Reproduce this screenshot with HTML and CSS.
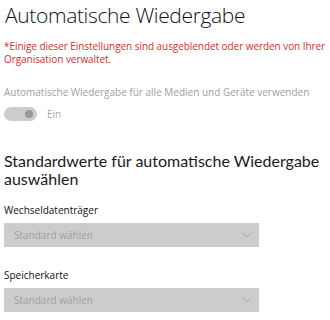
FILE: index.html
```html
<!DOCTYPE html>
<html lang="de">
<head>
  <meta charset="UTF-8" />
  <meta name="viewport" content="width=device-width, initial-scale=1.0" />
  <title>Automatische Wiedergabe</title>
  <link rel="stylesheet" href="styles.css">
</head>
<body>
  <div class="page">
    <h1 class="title">Automatische Wiedergabe</h1>
    <div class="notice">*Einige dieser Einstellungen sind ausgeblendet oder werden von Ihrer Organisation verwaltet.</div>

    <div class="setting">
      <div class="label muted">Automatische Wiedergabe für alle Medien und Geräte verwenden</div>
      <div class="toggle-row">
        <span class="toggle"><span class="knob"></span></span>
        <span class="toggle-text">Ein</span>
      </div>
    </div>

    <h2 class="subtitle">Standardwerte für automatische Wiedergabe auswählen</h2>

    <div class="field">
      <div class="label">Wechseldatenträger</div>
      <div class="select">
        <span>Standard wählen</span>
        <svg class="chevron" width="10" height="6" viewBox="0 0 10 6"><path d="M0.5 0.5 L5 5 L9.5 0.5" fill="none" stroke="#a6a6a6" stroke-width="1"/></svg>
      </div>
    </div>

    <div class="field">
      <div class="label">Speicherkarte</div>
      <div class="select">
        <span>Standard wählen</span>
        <svg class="chevron" width="10" height="6" viewBox="0 0 10 6"><path d="M0.5 0.5 L5 5 L9.5 0.5" fill="none" stroke="#a6a6a6" stroke-width="1"/></svg>
      </div>
    </div>
  </div>
</body>
</html>
```

FILE: styles.css
```css
body {
  margin: 0;
  padding: 0;
  font-family: "Segoe UI", "Open Sans", "Noto Sans", sans-serif;
  background-color: #fff;
  color: #000;
}

.page {
  padding: 0 0 0 4px;
}

.title {
  margin: 0;
  font-size: 21px;
  font-weight: 300;
  line-height: 30px;
  letter-spacing: -0.35px;
  color: #111;
  padding-left: 1px;
}

.notice {
  margin-top: 10px;
  font-size: 10px;
  line-height: 13px;
  letter-spacing: -0.06px;
  color: #d0312f;
}

.setting {
  margin-top: 19px;
}

.label {
  font-size: 10px;
  line-height: 14px;
  color: #111;
}

.label.muted {
  color: #a0a0a0;
}

.toggle-row {
  display: flex;
  align-items: center;
  gap: 10px;
  margin-top: 8px;
}

.toggle {
  display: flex;
  align-items: center;
  justify-content: flex-end;
  width: 33px;
  height: 14px;
  border-radius: 7px;
  background: #cccccc;
  padding-right: 4px;
  box-sizing: border-box;
}

.knob {
  width: 8px;
  height: 8px;
  border-radius: 50%;
  background: #999;
}

.toggle-text {
  font-size: 10px;
  color: #a8a8a8;
}

.subtitle {
  margin: 31px 0 0;
  font-family: Lato, "Open Sans", sans-serif;
  font-size: 16px;
  font-weight: 400;
  line-height: 18px;
  color: #1a1a1a;
}

.field {
  margin-top: 15px;
}

.field + .field {
  margin-top: 21px;
}

.select {
  display: flex;
  align-items: center;
  justify-content: space-between;
  width: 255px;
  height: 24px;
  margin-top: 6px;
  padding: 0 7px 0 10px;
  box-sizing: border-box;
  background: #cccccc;
  font-size: 10px;
  color: #a0a0a0;
}
```
